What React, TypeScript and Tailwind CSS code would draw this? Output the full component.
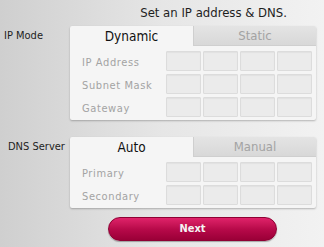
import React from "react";

const font = { fontFamily: '"DejaVu Sans Condensed", "Liberation Sans", sans-serif' };

function Cells() {
  return (
    <div className="flex gap-[2px]">
      {[0, 1, 2, 3].map((i) => (
        <div
          key={i}
          className="w-[35px] h-[20px] bg-[#ebebeb] border border-[#dcdcdc] rounded-[1px] shadow-[inset_0_1px_1px_rgba(0,0,0,0.04)]"
        />
      ))}
    </div>
  );
}

function Panel({
  active,
  inactive,
  rows,
  tabH,
}: {
  active: string;
  inactive: string;
  rows: string[];
  tabH: string;
}) {
  return (
    <div className="w-[246px] bg-[#f5f5f5] rounded-[2px] shadow-[0_1px_2px_rgba(0,0,0,0.25)] overflow-hidden">
      <div className={`flex ${tabH}`}>
        <div className="w-[123px] flex items-center justify-center text-[13.5px] text-[#111]">
          {active}
        </div>
        <div className="flex-1 flex items-center justify-center text-[13px] text-[#a3a3a3] bg-gradient-to-b from-[#e4e4e4] to-[#d8d8d8] border-l border-b border-[#cfcfcf]">
          {inactive}
        </div>
      </div>
      <div className="flex flex-col gap-[3px] pt-[5px] pb-[3px] pr-[4px]">
        {rows.map((r) => (
          <div key={r} className="flex items-start">
            <div className="w-[98px] pl-[12px] pt-[4px] text-[11px] leading-[16px] tracking-[0.6px] text-[#a3a3a3] whitespace-nowrap">
              {r}
            </div>
            <Cells />
          </div>
        ))}
      </div>
    </div>
  );
}

export default function App() {
  return (
    <div
      style={font}
      className="w-[324px] h-[247px] overflow-hidden bg-gradient-to-r from-[#cfcfcf] via-[#e6e6e6] to-[#f2f2f2] flex flex-col"
    >
      <div className="h-[26px] flex items-center justify-end pr-[37px] text-[13px] text-[#1e1e1e]">
        Set an IP address &amp; DNS.
      </div>
      <div className="flex">
        <div className="w-[70px] pl-[4px] pt-[2px] text-[11px] text-[#1e1e1e] whitespace-nowrap">IP Mode</div>
        <Panel
          active="Dynamic"
          inactive="Static"
          rows={["IP Address", "Subnet Mask", "Gateway"]}
          tabH="h-[20px]"
        />
      </div>
      <div className="flex mt-[17px]">
        <div className="w-[70px] pl-[8px] pt-[2px] text-[11px] text-[#1e1e1e] whitespace-nowrap">DNS Server</div>
        <Panel active="Auto" inactive="Manual" rows={["Primary", "Secondary"]} tabH="h-[20px]" />
      </div>
      <div className="flex mt-[9px] pl-[108px]">
        <div className="w-[169px] h-[24px] rounded-full bg-gradient-to-b from-[#e0226a] via-[#b80a4a] to-[#9a0037] border border-[#8e0033] shadow-[0_1px_1px_rgba(0,0,0,0.3)] flex items-center justify-center text-[11px] font-bold text-[#f4f4f4]">
          Next
        </div>
      </div>
    </div>
  );
}
